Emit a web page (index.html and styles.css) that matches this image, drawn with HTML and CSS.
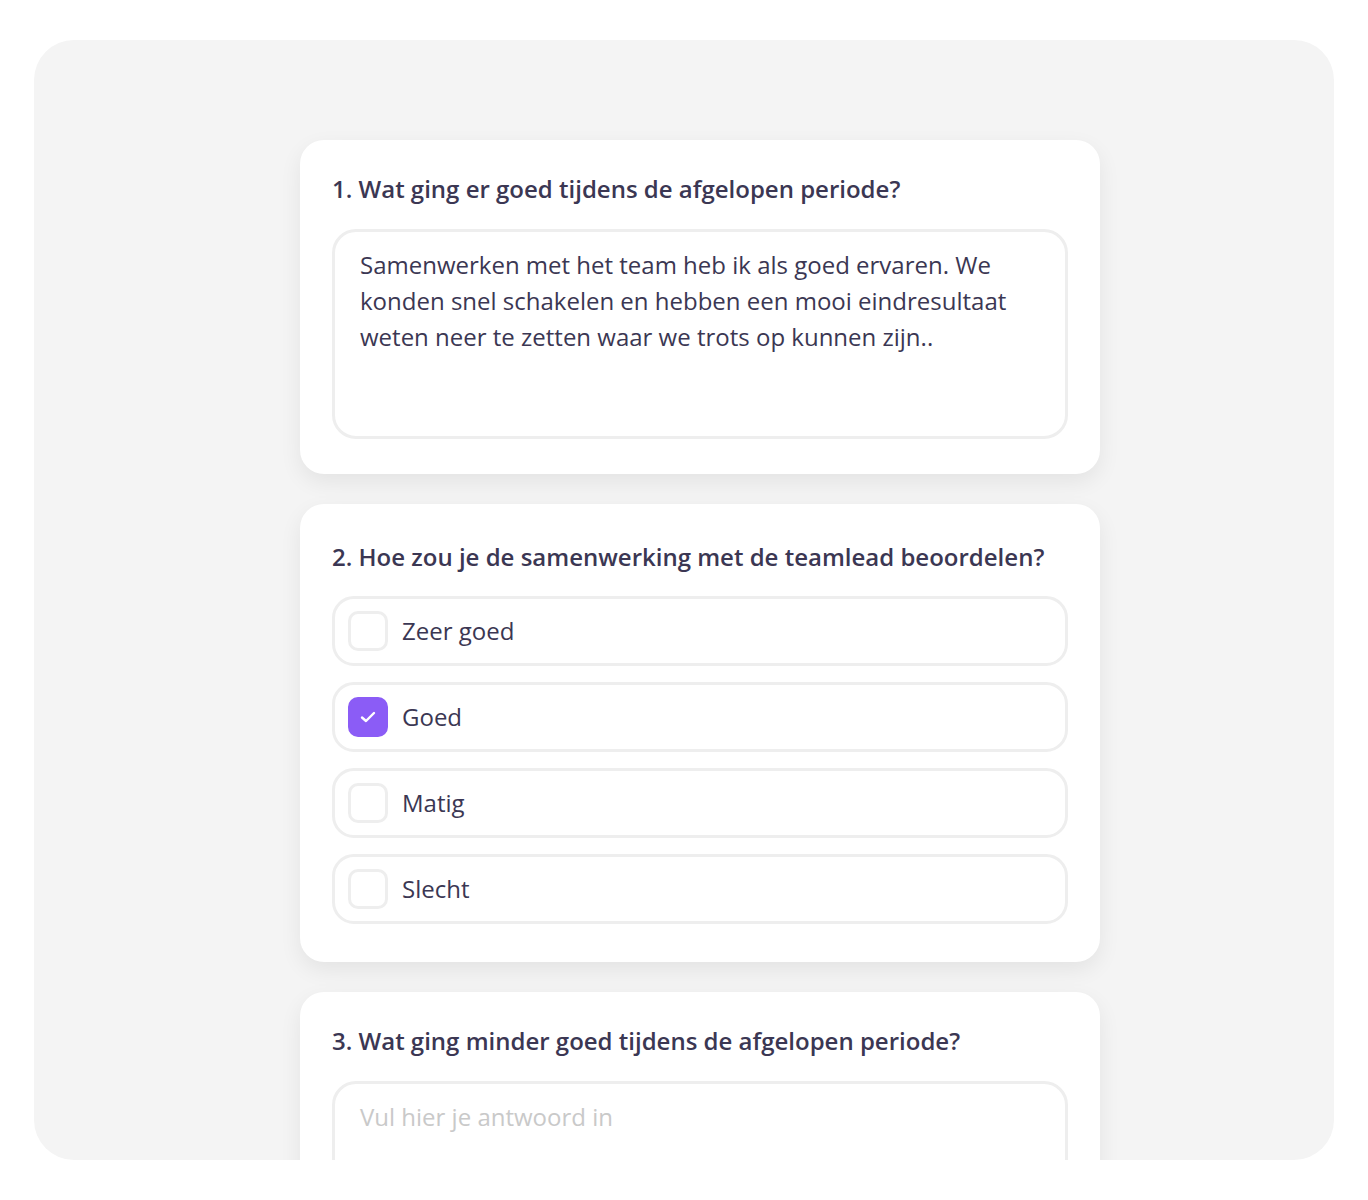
FILE: index.html
```html
<!DOCTYPE html>
<html lang="nl">
<head>
<meta charset="utf-8">
<title>Evaluatie</title>
<link rel="stylesheet" href="styles.css">
</head>
<body>
<div class="frame">
  <div class="stack">
    <section class="card">
      <h2 class="question">1. Wat ging er goed tijdens de afgelopen periode?</h2>
      <div class="answer">Samenwerken met het team heb ik als goed ervaren. We konden snel schakelen en hebben een mooi eindresultaat weten neer te zetten waar we trots op kunnen zijn..</div>
    </section>
    <section class="card card-choice">
      <h2 class="question">2. Hoe zou je de samenwerking met de teamlead beoordelen?</h2>
      <div class="options">
        <div class="option"><span class="box"></span><span class="label">Zeer goed</span></div>
        <div class="option"><span class="box box-checked"><svg width="18" height="14" viewBox="0 0 18 14"><polyline points="3,7.5 7,11 15,3" fill="none" stroke="#fff" stroke-width="2.4" stroke-linecap="round" stroke-linejoin="round"/></svg></span><span class="label">Goed</span></div>
        <div class="option"><span class="box"></span><span class="label">Matig</span></div>
        <div class="option"><span class="box"></span><span class="label">Slecht</span></div>
      </div>
    </section>
    <section class="card">
      <h2 class="question">3. Wat ging minder goed tijdens de afgelopen periode?</h2>
      <div class="answer answer-empty">Vul hier je antwoord in</div>
    </section>
  </div>
</div>
</body>
</html>
```
FILE: styles.css
```css
* { box-sizing: border-box; }
html, body { margin: 0; background: #ffffff; }
body {
  font-family: "Open Sans", "Liberation Sans", sans-serif;
  color: #3b3753;
  padding: 40px 34px;
  height: 1200px;
}
.frame {
  width: 1300px;
  height: 1120px;
  background: #f4f4f4;
  border-radius: 40px;
  overflow: hidden;
  padding: 100px 0 0 266px;
}
.stack {
  width: 800px;
  display: flex;
  flex-direction: column;
  gap: 30px;
}
.card {
  background: #ffffff;
  border-radius: 24px;
  box-shadow: 0 8px 22px rgba(0, 0, 0, 0.07);
  padding: 34px 32px 35px;
}
.card-choice { padding: 38px 32px 38px; }
.question {
  margin: 0 0 25px;
  font-size: 24px;
  line-height: 30px;
  font-weight: 600;
  color: #3b3753;
}
.card-choice .question { margin-bottom: 24px; }
.answer {
  height: 210px;
  border: 3px solid #eeeeee;
  border-radius: 24px;
  padding: 15px 25px;
  font-size: 24px;
  line-height: 36px;
  color: #3b3753;
}
.answer-empty { color: #c9c9c9; }
.options {
  display: flex;
  flex-direction: column;
  gap: 16px;
}
.option {
  height: 70px;
  border: 3px solid #eeeeee;
  border-radius: 22px;
  display: flex;
  align-items: center;
  padding: 0 13px;
  gap: 14px;
}
.box {
  width: 40px;
  height: 40px;
  border: 3px solid #eeeeee;
  border-radius: 10px;
  display: flex;
  align-items: center;
  justify-content: center;
  flex: none;
}
.box-checked {
  background: #8b5cf6;
  border-color: #8b5cf6;
}
.label {
  font-size: 24px;
  line-height: 30px;
  color: #3b3753;
}
```
